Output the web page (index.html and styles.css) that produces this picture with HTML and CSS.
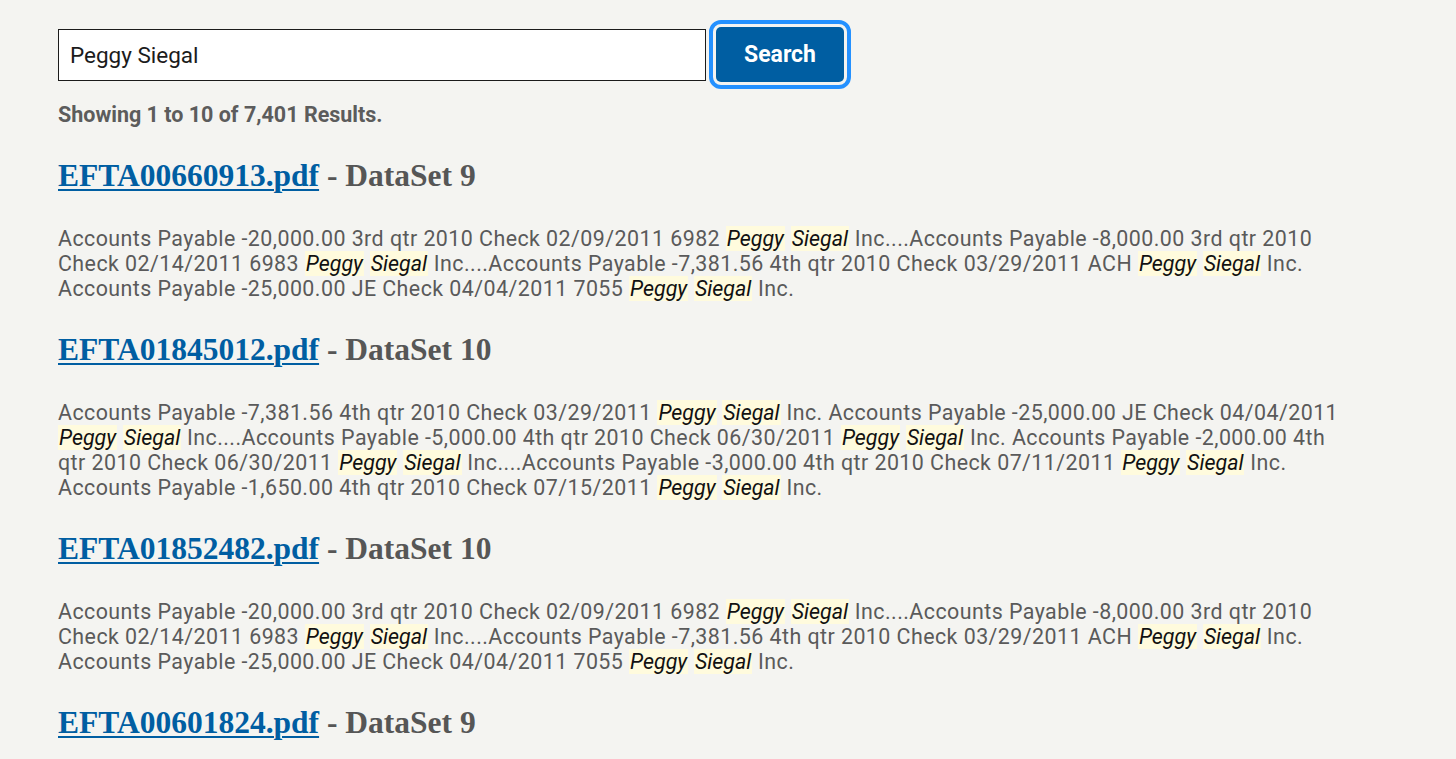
FILE: index.html
```html
<!DOCTYPE html>
<html lang="en">
<head>
<meta charset="utf-8">
<title>Search</title>
<link rel="stylesheet" href="styles.css">
</head>
<body>
<main class="page">
  <form class="search">
    <input class="search-input" type="text" value="Peggy Siegal">
    <button class="search-btn" type="button">Search</button>
  </form>
  <p class="count">Showing 1 to 10 of 7,401 Results.</p>

  <section class="result">
    <h3 class="result-title"><a href="#">EFTA00660913.pdf</a> - DataSet 9</h3>
    <p class="snippet">Accounts Payable -20,000.00 3rd qtr 2010 Check 02/09/2011 6982 <mark>Peggy</mark> <mark>Siegal</mark> Inc....Accounts Payable -8,000.00 3rd qtr 2010 Check 02/14/2011 6983 <mark>Peggy</mark> <mark>Siegal</mark> Inc....Accounts Payable -7,381.56 4th qtr 2010 Check 03/29/2011 ACH <mark>Peggy</mark> <mark>Siegal</mark> Inc. Accounts Payable -25,000.00 JE Check 04/04/2011 7055 <mark>Peggy</mark> <mark>Siegal</mark> Inc.</p>
  </section>

  <section class="result">
    <h3 class="result-title"><a href="#">EFTA01845012.pdf</a> - DataSet 10</h3>
    <p class="snippet">Accounts Payable -7,381.56 4th qtr 2010 Check 03/29/2011 <mark>Peggy</mark> <mark>Siegal</mark> Inc. Accounts Payable -25,000.00 JE Check 04/04/2011 <mark>Peggy</mark> <mark>Siegal</mark> Inc....Accounts Payable -5,000.00 4th qtr 2010 Check 06/30/2011 <mark>Peggy</mark> <mark>Siegal</mark> Inc. Accounts Payable -2,000.00 4th qtr 2010 Check 06/30/2011 <mark>Peggy</mark> <mark>Siegal</mark> Inc....Accounts Payable -3,000.00 4th qtr 2010 Check 07/11/2011 <mark>Peggy</mark> <mark>Siegal</mark> Inc. Accounts Payable -1,650.00 4th qtr 2010 Check 07/15/2011 <mark>Peggy</mark> <mark>Siegal</mark> Inc.</p>
  </section>

  <section class="result">
    <h3 class="result-title"><a href="#">EFTA01852482.pdf</a> - DataSet 10</h3>
    <p class="snippet">Accounts Payable -20,000.00 3rd qtr 2010 Check 02/09/2011 6982 <mark>Peggy</mark> <mark>Siegal</mark> Inc....Accounts Payable -8,000.00 3rd qtr 2010 Check 02/14/2011 6983 <mark>Peggy</mark> <mark>Siegal</mark> Inc....Accounts Payable -7,381.56 4th qtr 2010 Check 03/29/2011 ACH <mark>Peggy</mark> <mark>Siegal</mark> Inc. Accounts Payable -25,000.00 JE Check 04/04/2011 7055 <mark>Peggy</mark> <mark>Siegal</mark> Inc.</p>
  </section>

  <section class="result">
    <h3 class="result-title"><a href="#">EFTA00601824.pdf</a> - DataSet 9</h3>
    <p class="snippet">Accounts Payable -20,000.00 3rd qtr 2010 Check 02/09/2011 6982 <mark>Peggy</mark> <mark>Siegal</mark> Inc.</p>
  </section>
</main>
</body>
</html>
```

FILE: styles.css
```css
* { box-sizing: border-box; }
html, body { margin: 0; padding: 0; }
body {
  background: #f4f4f1;
  font-family: Roboto, "Liberation Sans", Arial, sans-serif;
  color: #565656;
  overflow: hidden;
}
.page {
  width: 1350px;
  padding: 27px 0 0 58px;
}
.search {
  display: flex;
  align-items: center;
  gap: 10px;
  margin: 0;
}
.search-input {
  width: 648px;
  height: 52px;
  border: 1px solid #1b1b1b;
  background: #fff;
  padding: 0 11px;
  font-family: Roboto, "Liberation Sans", Arial, sans-serif;
  font-size: 22.5px;
  color: #1b1b1b;
  margin: 0;
}
.search-btn {
  width: 128px;
  height: 55px;
  border: 0;
  border-radius: 5px;
  background: #005ea2;
  color: #fff;
  font-family: Roboto, "Liberation Sans", Arial, sans-serif;
  font-weight: 700;
  font-size: 23px;
  outline: 4px solid #2491ff;
  outline-offset: 3px;
  margin: 0;
}
.count {
  margin: 20px 0 0;
  font-size: 21.5px;
  line-height: 25px;
  font-weight: 700;
  color: #5c5c5c;
}
.result-title {
  margin: 28.5px 0 0;
  font-family: "Liberation Serif", "DejaVu Serif", serif;
  font-weight: 700;
  font-size: 31.5px;
  line-height: 40px;
  color: #565656;
}
.result-title a {
  color: #005ea2;
  text-decoration: underline;
  text-decoration-thickness: 2px;
  text-underline-offset: 3px;
}
.snippet {
  margin: 30.5px 0 0;
  font-family: Roboto, "Liberation Sans", sans-serif;
  font-size: 21.4px;
  line-height: 25px;
  letter-spacing: 0.45px;
  color: #5a5a5a;
}
.snippet mark {
  letter-spacing: 0;
  padding: 0 1px;
  background: #fffbdd;
  color: #111;
  font-style: italic;
}
```
